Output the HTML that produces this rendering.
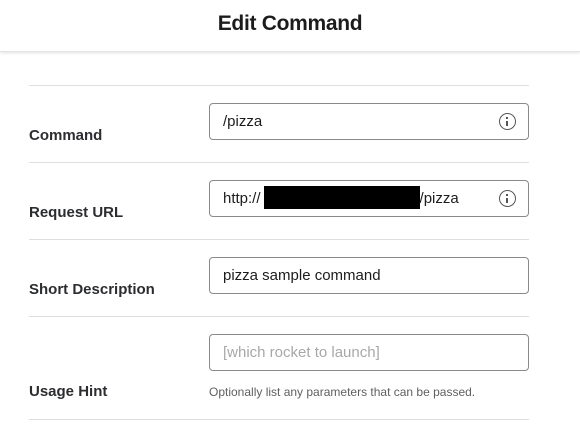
<!DOCTYPE html>
<html><head><style>
*{margin:0;padding:0;box-sizing:border-box}
body{width:580px;height:425px;background:#fff;font-family:"Liberation Sans",sans-serif;color:#1d1c1d;position:relative;overflow:hidden}
.hdr{position:absolute;left:0;top:0;width:580px;height:52px;background:#fff;box-shadow:0 1px 3px rgba(0,0,0,.12);border-bottom:1px solid #e4e4e4;text-align:center;font-weight:bold;font-size:21px;line-height:48px;letter-spacing:-0.3px}
.line{position:absolute;left:29px;width:500px;height:1px;background:#dedede}
.lbl{position:absolute;left:29px;font-weight:bold;font-size:15px;line-height:18px;color:#2c2d30}
.inp{position:absolute;left:209px;width:320px;height:37px;border:1px solid #8a8a8a;border-radius:4px;font-size:15px;line-height:35px;padding-left:13px;color:#1d1c1d}
.ic{position:absolute;right:12px;top:9px;width:17px;height:17px;border:1.3px solid #555;border-radius:50%}
.ic:before{content:"";position:absolute;left:6.3px;top:3px;width:2px;height:2px;background:#555}
.ic:after{content:"";position:absolute;left:6.3px;top:6.5px;width:2px;height:5.5px;background:#555}
</style></head><body>
<div class="hdr">Edit Command</div>
<div class="line" style="top:85px"></div>
<div class="line" style="top:162px"></div>
<div class="line" style="top:239px"></div>
<div class="line" style="top:316px"></div>
<div class="line" style="top:419px"></div>
<div class="lbl" style="top:127px">Command</div>
<div class="lbl" style="top:204px">Request URL</div>
<div class="lbl" style="top:281px">Short Description</div>
<div class="lbl" style="top:383px">Usage Hint</div>
<div class="inp" style="top:103px">/pizza<span class="ic"></span></div>
<div class="inp" style="top:180px">http://<span style="display:inline-block;width:156px;height:23px;background:#000;vertical-align:middle;margin-top:-3px;margin-left:3px"></span>/pizza<span class="ic"></span></div>
<div class="inp" style="top:257px">pizza sample command</div>
<div class="inp" style="top:334px;color:#a8a8a8">[which rocket to launch]</div>
<div style="position:absolute;left:209px;top:385px;font-size:12px;color:#616061">Optionally list any parameters that can be passed.</div>
</body></html>
